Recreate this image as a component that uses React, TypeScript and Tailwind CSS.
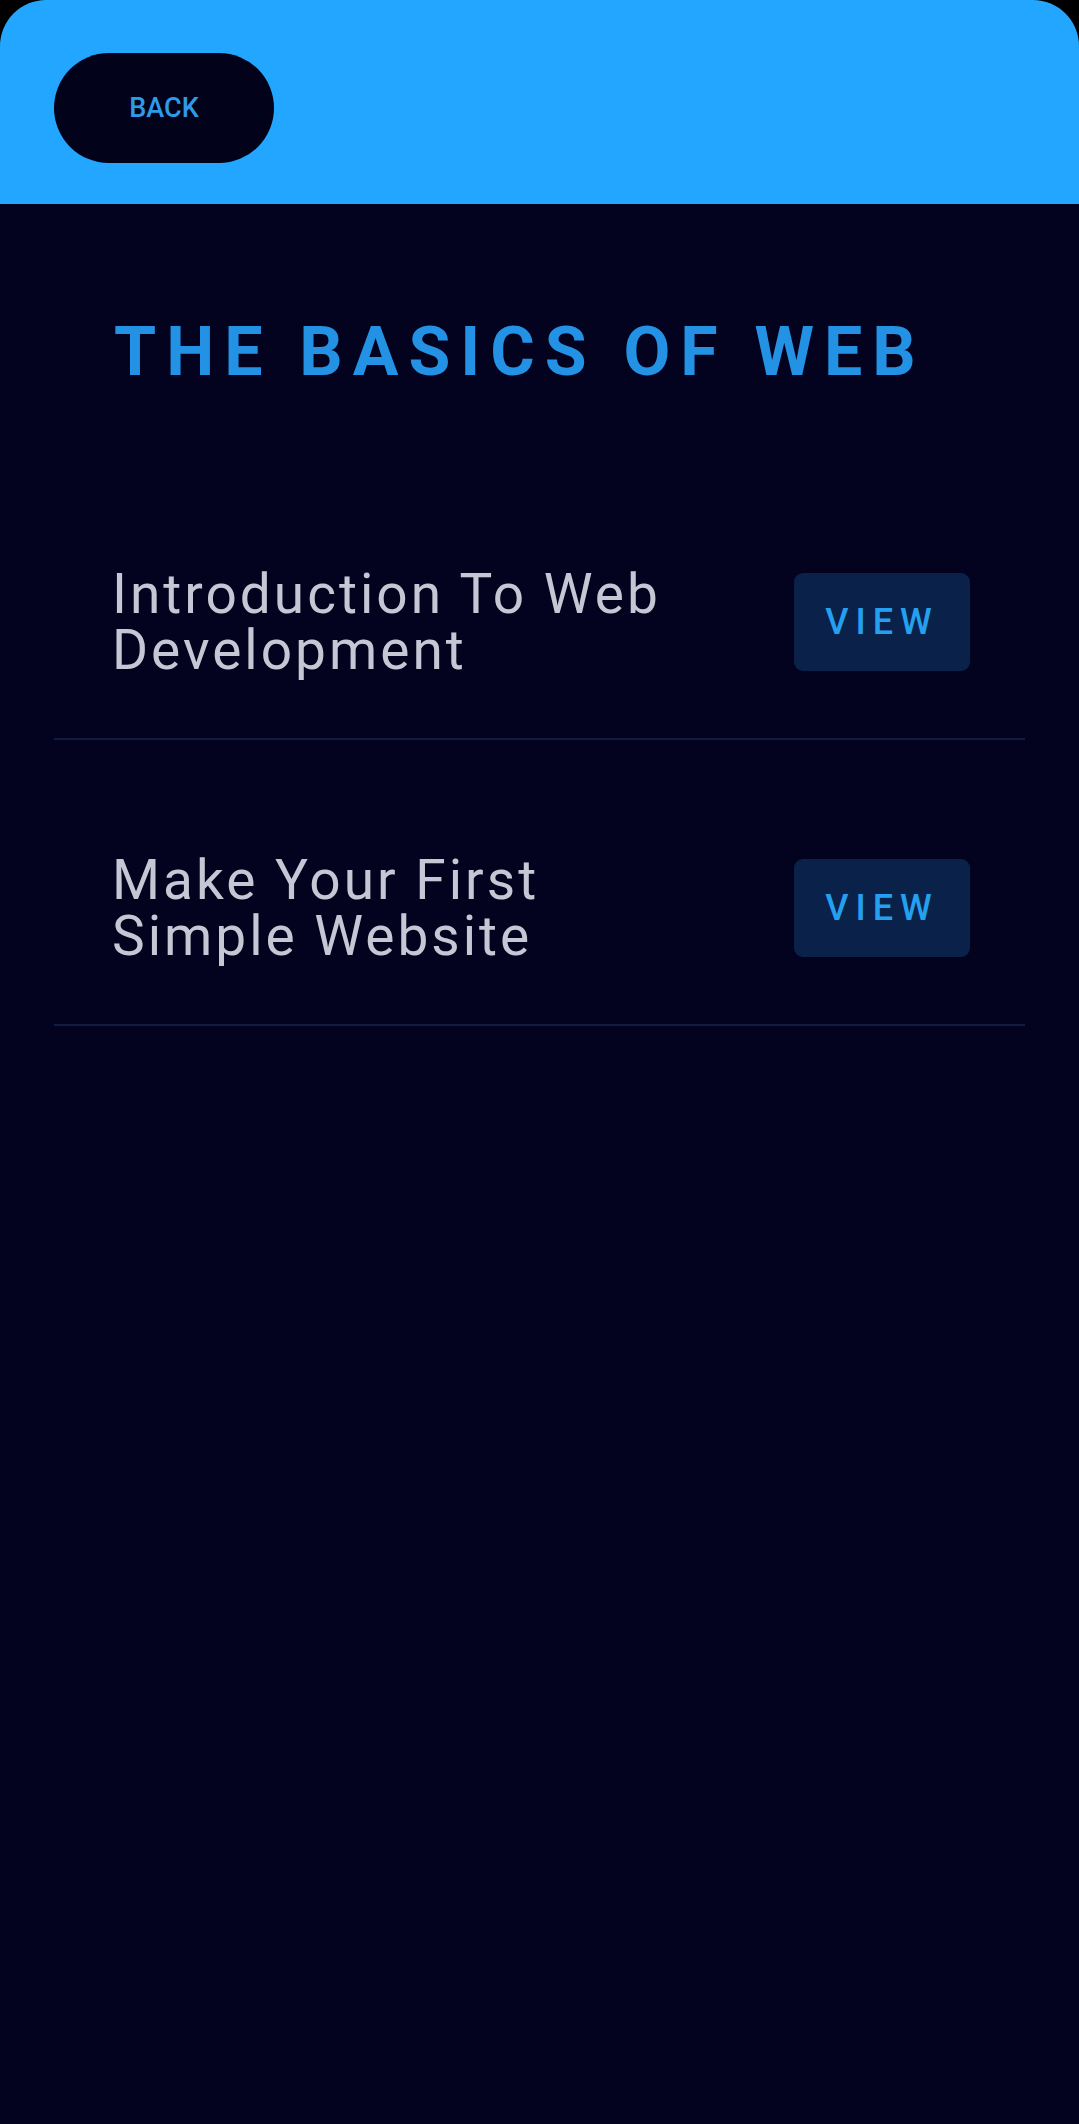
import React from "react";

type Lesson = {
  title: string;
};

const lessons: Lesson[] = [
  { title: "Introduction To Web Development" },
  { title: "Make Your First Simple Website" },
];

export default function App() {
  return (
    <div
      className="flex min-h-screen flex-col bg-black"
      style={{ fontFamily: "Roboto, 'Noto Sans', sans-serif" }}
    >
      <header className="rounded-t-[46px] bg-[#22a6ff] px-[54px] pb-[41px] pt-[53px]">
        <button
          type="button"
          className="flex h-[110px] w-[220px] items-center justify-center rounded-full bg-[#03021b] text-[27px] font-medium text-[#2c9bea]"
        >
          BACK
        </button>
      </header>

      <main className="flex-1 bg-[#03031f] px-[54px]">
        <h1 className="mt-[114px] pl-[60px] text-[68px] font-bold leading-[68px] tracking-[10px] text-[#2492e4]">
          THE BASICS OF WEB
        </h1>

        <div className="mt-[68px]">
          {lessons.map((lesson) => (
            <LessonRow key={lesson.title} lesson={lesson} />
          ))}
        </div>
      </main>
    </div>
  );
}

function LessonRow({ lesson }: { lesson: Lesson }) {
  return (
    <div className="flex items-center justify-between border-b-2 border-[#101c42] pb-[60px] pl-[58px] pr-[55px] pt-[112px]">
      <p className="w-[570px] text-[55px] leading-[56px] tracking-[3px] text-[#c6c7d4]">
        {lesson.title}
      </p>
      <button
        type="button"
        className="flex h-[98px] w-[176px] items-center justify-center rounded-[9px] bg-[#0a2249] text-[36px] font-medium tracking-[7px] text-[#25a0f0]"
      >
        VIEW
      </button>
    </div>
  );
}
